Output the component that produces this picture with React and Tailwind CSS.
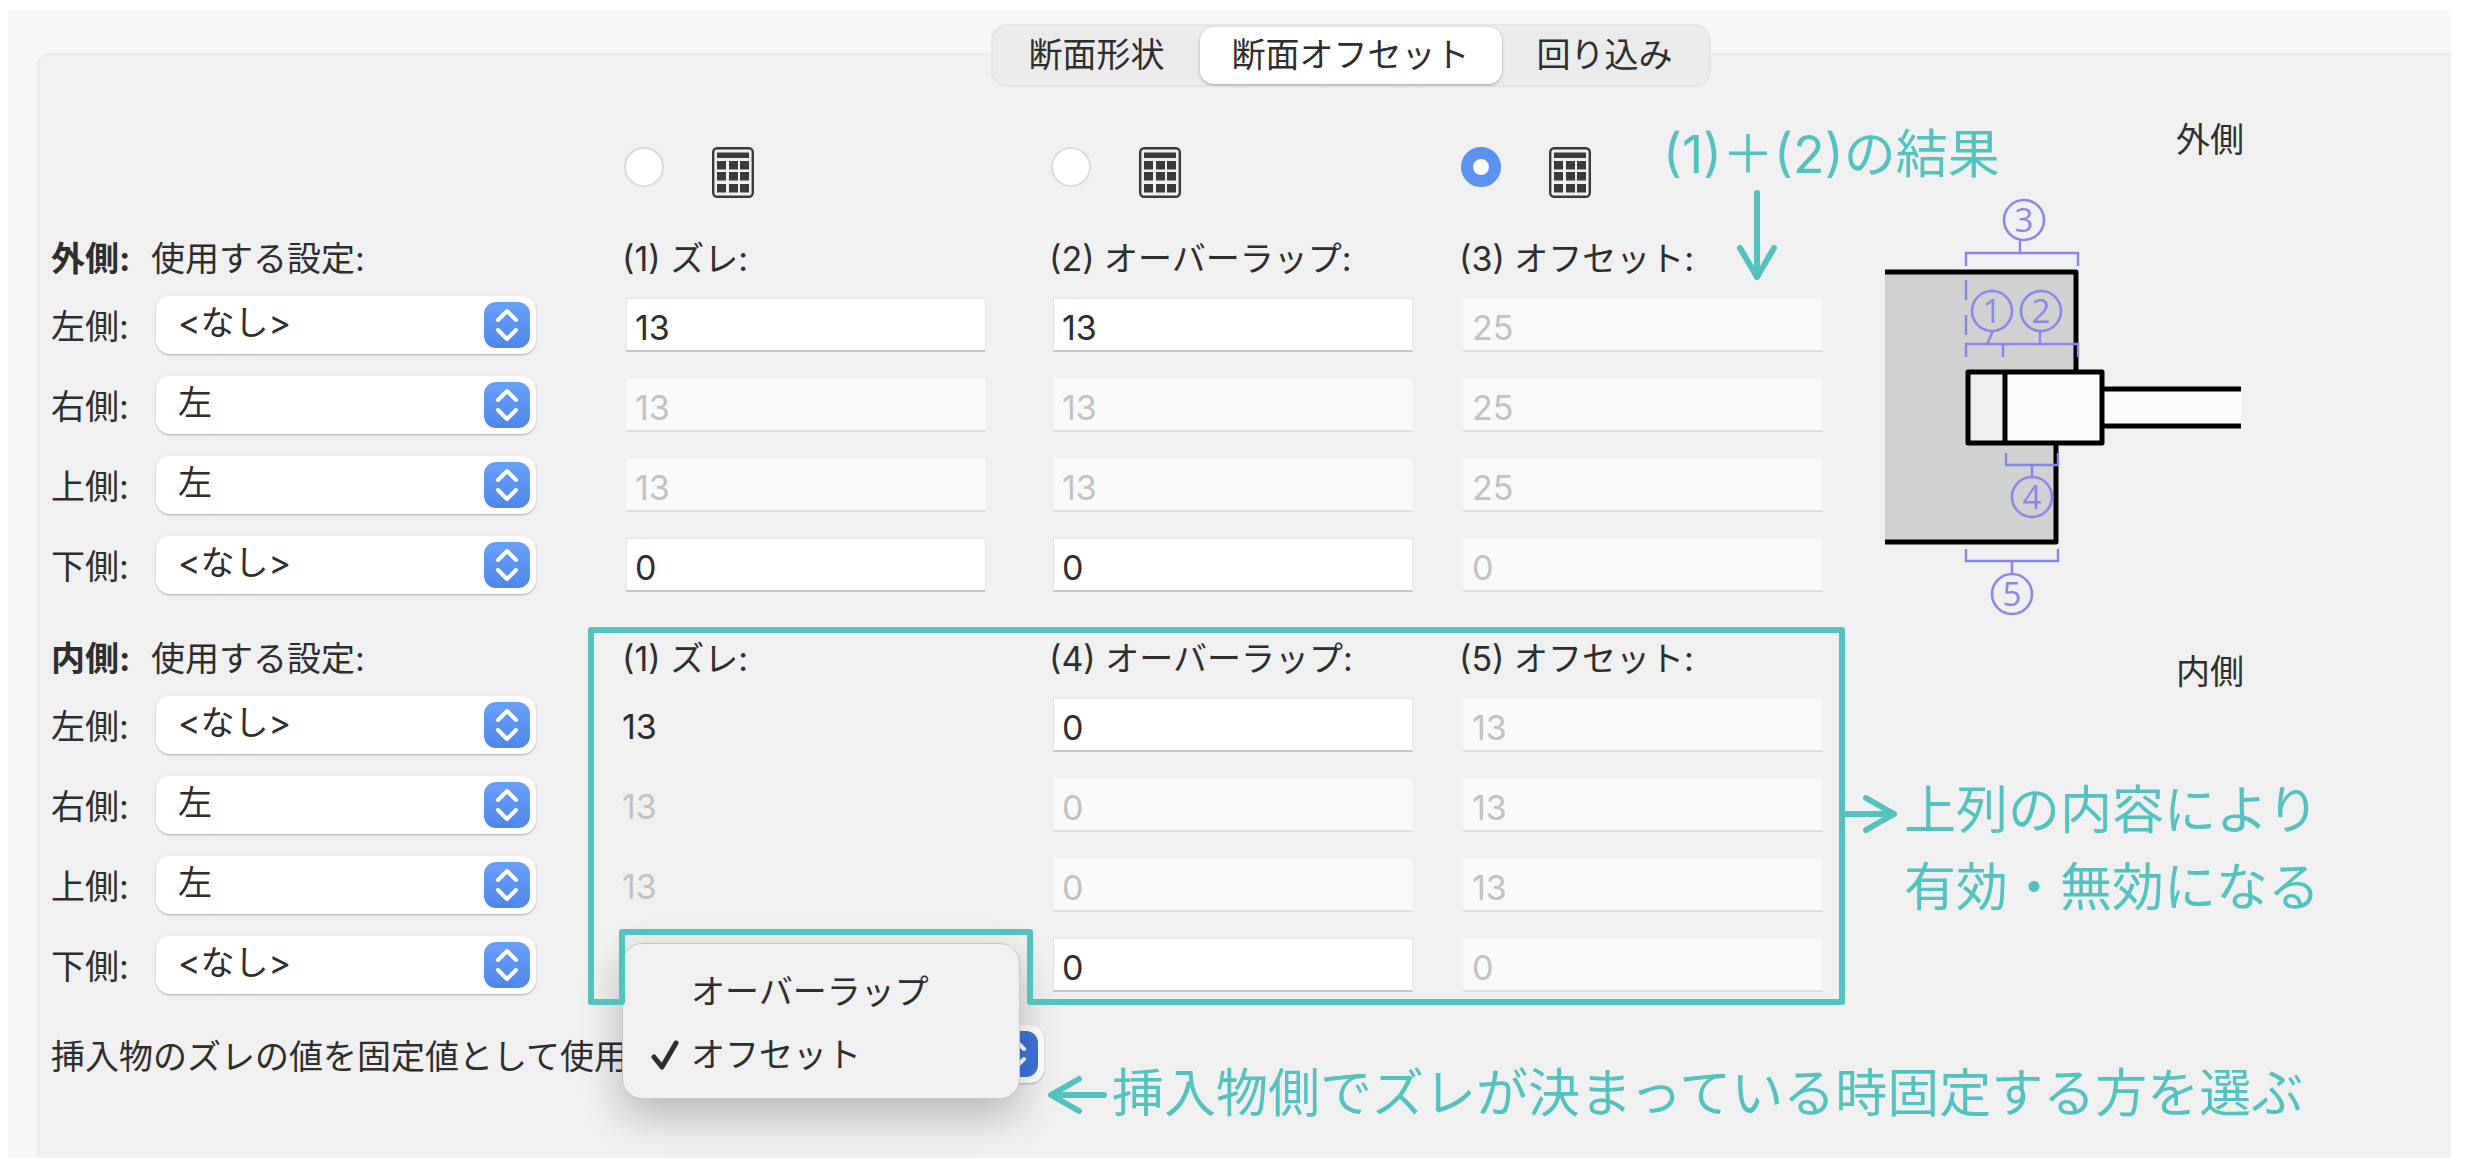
import { useState } from "react";

const SETTINGS = ["<なし>", "左", "右", "上", "下"];
const TABS = ["断面形状", "断面オフセット", "回り込み"];
const FIX_MODES = ["オーバーラップ", "オフセット"];

const outerGroup = {
  id: "outer",
  title: "外側:",
  heads: ["(1) ズレ:", "(2) オーバーラップ:", "(3) オフセット:"],
  rows: [
    { side: "左側:", setting: "<なし>", values: ["13", "13", "25"], own: true },
    { side: "右側:", setting: "左", values: ["13", "13", "25"], own: false },
    { side: "上側:", setting: "左", values: ["13", "13", "25"], own: false },
    { side: "下側:", setting: "<なし>", values: ["0", "0", "0"], own: true },
  ],
};

const innerGroup = {
  id: "inner",
  title: "内側:",
  plainGap: true,
  heads: ["(1) ズレ:", "(4) オーバーラップ:", "(5) オフセット:"],
  rows: [
    { side: "左側:", setting: "<なし>", values: ["13", "0", "13"], own: true },
    { side: "右側:", setting: "左", values: ["13", "0", "13"], own: false },
    { side: "上側:", setting: "左", values: ["13", "0", "13"], own: false },
    { side: "下側:", setting: "<なし>", values: ["", "0", "0"], own: true },
  ],
};

function Calculator() {
  return (
    <svg viewBox="0 0 42 51" className="h-[51px] w-[42px] text-[#3a3a3a]" fill="currentColor" aria-hidden="true">
      <rect x="1.2" y="1.2" width="39.6" height="48.6" rx="4" fill="none" stroke="currentColor" strokeWidth="2.4" />
      <rect x="5" y="5.5" width="32" height="5.5" />
      {[14, 25, 37].map((y) =>
        [5, 17, 28].map((x) => <rect key={`${x}-${y}`} x={x} y={y} width="9" height="8.5" />)
      )}
    </svg>
  );
}

function PopUp({ id, value, onChange, options, pressed }) {
  return (
    <div className="relative h-[58px] w-full">
      <select
        id={id}
        value={value}
        onChange={(e) => onChange(e.target.value)}
        className="h-full w-full appearance-none rounded-[14px] bg-white pr-14 pb-1 pl-[22px] shadow-[0_1px_2px_rgba(0,0,0,0.28)]"
      >
        {options.map((o) => (
          <option key={o}>{o}</option>
        ))}
      </select>
      <span
        className={
          pressed
            ? "pointer-events-none absolute top-1.5 right-1.5 rounded-xl bg-[#3f74dc]"
            : "pointer-events-none absolute top-1.5 right-1.5 rounded-xl bg-linear-to-b from-[#68a1f3] to-[#4f86ec]"
        }
      >
        <svg viewBox="0 0 46 46" className="size-[46px]" fill="none" stroke="#fff" strokeWidth="4" strokeLinecap="round" strokeLinejoin="round" aria-hidden="true">
          <path d="M14 18l9-9 9 9M14 28l9 9 9-9" />
        </svg>
      </span>
    </div>
  );
}

function Group({ group, children }) {
  const [settings, setSettings] = useState(group.rows.map((r) => r.setting));
  const [values, setValues] = useState(group.rows.map((r) => r.values));

  const changeSetting = (i, v) => setSettings(settings.map((s, n) => (n === i ? v : s)));
  const changeValue = (i, c, v) =>
    setValues(values.map((row, n) => (n === i ? row.map((x, m) => (m === c ? v : x)) : row)));

  return (
    <section className="relative">
      <div className="grid h-20 grid-cols-[571px_427px_410px_363px] items-center pt-7">
        <div className="flex">
          <h2 className="w-[100px] font-bold">{group.title}</h2>
          <span>使用する設定:</span>
        </div>
        {group.heads.map((h) => (
          <span key={h}>{h}</span>
        ))}
      </div>
      {group.rows.map((row, i) => (
        <div key={row.side} className="grid h-20 grid-cols-[571px_427px_410px_363px] items-center">
          <div className="flex items-center">
            <label htmlFor={`${group.id}-${i}`} className="w-[105px] shrink-0 pt-1">
              {row.side}
            </label>
            <div className="w-[380px]">
              <PopUp
                id={`${group.id}-${i}`}
                value={settings[i]}
                onChange={(v) => changeSetting(i, v)}
                options={SETTINGS}
              />
            </div>
          </div>
          {values[i].map((v, c) =>
            group.plainGap && c === 0 ? (
              <span key={c} className={row.own ? "pt-1 text-[#2b2b2b]" : "pt-1 text-[#c3c3c3]"}>
                {v}
              </span>
            ) : (
              <input
                key={c}
                type="text"
                aria-label={`${group.title} ${row.side} ${group.heads[c]}`}
                value={v}
                onChange={(e) => changeValue(i, c, e.target.value)}
                disabled={!row.own || c === 2}
                className="ml-1 h-[54px] w-[360px] border border-b-2 border-[#e4e4e4] border-b-[#c6c6c6] bg-white pt-1.5 pl-2 disabled:border-[#f3f3f3] disabled:border-b-[#dedede] disabled:bg-[#f9f9f9] disabled:text-[#c3c3c3]"
              />
            )
          )}
        </div>
      ))}
      {children}
    </section>
  );
}

function Mark({ x, y, n }) {
  return (
    <g>
      <circle cx={x} cy={y} r="20" fill="none" stroke="#8b89e8" strokeWidth="2.6" />
      <text x={x} y={y + 12} textAnchor="middle" fontSize="33" fill="#8b89e8" className="font-['Open_Sans',sans-serif]">
        {n}
      </text>
    </g>
  );
}

function SectionDiagram() {
  return (
    <svg viewBox="0 0 400 440" className="h-[440px] w-[400px]" fill="none" role="img" aria-label="断面図">
      <path d="M25 92H216V192H196V362H25Z" fill="#d1d1d1" />
      <path d="M25 92H216V192M196 262V362H25" stroke="#000" strokeWidth="5" strokeLinejoin="round" />
      <rect x="108" y="192" width="36" height="71" fill="#efefef" />
      <rect x="145" y="192" width="97" height="71" fill="#fcfcfc" />
      <rect x="243" y="208" width="138" height="38" fill="#fcfcfc" />
      <path d="M108 192H242V263H108ZM145 192V263M242 209H381M242 246H381" stroke="#000" strokeWidth="5" strokeLinejoin="round" />
      <g stroke="#8886ec" strokeWidth="2.4">
        <path d="M106 86V73H218V86M160 73V60" />
        <path d="M106 100V120M106 135V155" />
        <path d="M106 177V164H218V177M143 164V177M127 164L133 151M180 164V151" />
        <path d="M146 273V285H198V273M172 285V297" />
        <path d="M106 369V381H198V369M152 381V394" />
      </g>
      <Mark x={164} y={40} n="3" />
      <Mark x={132} y={131} n="1" />
      <Mark x={181} y={131} n="2" />
      <Mark x={172} y={317} n="4" />
      <Mark x={152} y={414} n="5" />
    </svg>
  );
}

export default function App() {
  const [tab, setTab] = useState(1);
  const [auto, setAuto] = useState(2);
  const [fixMode, setFixMode] = useState("オフセット");

  return (
    <main className="bg-white pt-2.5 pr-[15px] pb-3 pl-2 font-[Inter,'Noto_Sans_CJK_JP',sans-serif] text-[34px] leading-10 text-[#2e2e2e]">
      <div className="bg-[#f7f7f7] pt-3.5">
        <div className="relative z-10 flex justify-center pl-[242px]">
          <div role="tablist" className="flex h-[63px] rounded-[16px] border-2 border-[#e5e5e5] bg-[#ebebeb] p-px">
            {TABS.map((t, i) => (
              <button
                key={t}
                type="button"
                role="tab"
                aria-selected={tab === i}
                onClick={() => setTab(i)}
                className={
                  tab === i
                    ? "rounded-[14px] bg-white px-8 pb-0.5 shadow-[0_1px_3px_rgba(0,0,0,0.3)]"
                    : "rounded-[14px] px-[35px] pb-0.5"
                }
              >
                {t}
              </button>
            ))}
          </div>
        </div>

        <div className="-mt-[34px] ml-[29px] rounded-tl-xl border-t-2 border-l-2 border-[#ebebeb] bg-[#f0f0f0] pb-[34px] pl-3">
          <div className="flex">
            <form className="relative w-[1791px] shrink-0">
              <div className="grid grid-cols-[573px_427px_410px_361px] pt-[92px] pb-[7px]">
                <span />
                {[0, 1, 2].map((i) => (
                  <label key={i} className="flex items-start gap-12">
                    <input
                      type="radio"
                      name="auto"
                      aria-label={outerGroup.heads[i]}
                      checked={auto === i}
                      onChange={() => setAuto(i)}
                      className="size-10 appearance-none rounded-full border-2 border-[#dcdcdc] bg-white checked:border-[12px] checked:border-[#5b93f0]"
                    />
                    <Calculator />
                  </label>
                ))}
              </div>
              <Group group={outerGroup} />
              <Group group={innerGroup}>
                <svg
                  viewBox="0 0 1264 384"
                  className="pointer-events-none absolute top-[19px] left-[534px] z-20 h-[384px] w-[1264px]"
                  fill="none"
                  aria-hidden="true"
                >
                  <path d="M6 6H1257V378H445V308H37V378H6Z" stroke="#54c3c0" strokeWidth="6" strokeLinejoin="round" />
                </svg>
              </Group>

              <div className="absolute top-[70px] left-[1612px] text-[52px] leading-[60px] whitespace-nowrap text-[#54c3c0]">
                (1)＋(2)の結果
                <svg viewBox="0 0 44 96" className="ml-[72px] h-24 w-11" fill="none" stroke="currentColor" strokeWidth="6" strokeLinecap="round" strokeLinejoin="round" aria-hidden="true">
                  <path d="M22 8V92M5 63L22 92L39 63" />
                </svg>
              </div>
            </form>

            <aside className="flex-1 pt-[65px]">
              <p className="pl-[334px]">外側</p>
              <div className="pt-5 pl-[18px]">
                <SectionDiagram />
              </div>
              <p className="pt-8 pl-[334px]">内側</p>
              <div className="flex items-start gap-1.5 pt-20 text-[52px] leading-[77px] text-[#54c3c0]">
                <svg viewBox="0 0 56 77" className="h-[77px] w-14 shrink-0" fill="none" stroke="currentColor" strokeWidth="6" strokeLinecap="round" strokeLinejoin="round" aria-hidden="true">
                  <path d="M0 42H52M24 26L52 42L24 58" />
                </svg>
                <p>
                  上列の内容により
                  <br />
                  有効・無効になる
                </p>
              </div>
            </aside>
          </div>

          <div className="flex items-start pt-5">
            <label htmlFor="fix-mode" className="pt-3 whitespace-nowrap">
              挿入物のズレの値を固定値として使用
            </label>
            <div className="relative w-[416px] shrink-0">
              <PopUp id="fix-mode" value={fixMode} onChange={setFixMode} options={FIX_MODES} pressed />
              <div
                role="menu"
                className="absolute -top-[82px] -left-1.5 z-10 w-[398px] rounded-[20px] border border-[#c9c9c9] bg-[#f0f0f0] pt-4 pb-3 shadow-[0_16px_40px_rgba(0,0,0,0.24)]"
              >
                {FIX_MODES.map((m) => (
                  <button
                    key={m}
                    type="button"
                    role="menuitemradio"
                    aria-checked={fixMode === m}
                    onClick={() => setFixMode(m)}
                    className="flex h-[63px] w-full items-center gap-3 pl-7"
                  >
                    <svg viewBox="0 0 28 32" className="h-8 w-7" fill="none" stroke="currentColor" strokeWidth="5" strokeLinecap="round" strokeLinejoin="round" aria-hidden="true">
                      {fixMode === m && <path d="M3 18L11 28L25 4" />}
                    </svg>
                    {m}
                  </button>
                ))}
              </div>
            </div>
            <div className="flex items-center gap-1 pt-[39px] pl-0.5 text-[52px] leading-[60px] whitespace-nowrap text-[#54c3c0]">
              <svg viewBox="0 0 62 60" className="h-[60px] w-[62px]" fill="none" stroke="currentColor" strokeWidth="6" strokeLinecap="round" strokeLinejoin="round" aria-hidden="true">
                <path d="M58 31H5M33 15L5 31L33 47" />
              </svg>
              <p>挿入物側でズレが決まっている時固定する方を選ぶ</p>
            </div>
          </div>
        </div>
      </div>
    </main>
  );
}
